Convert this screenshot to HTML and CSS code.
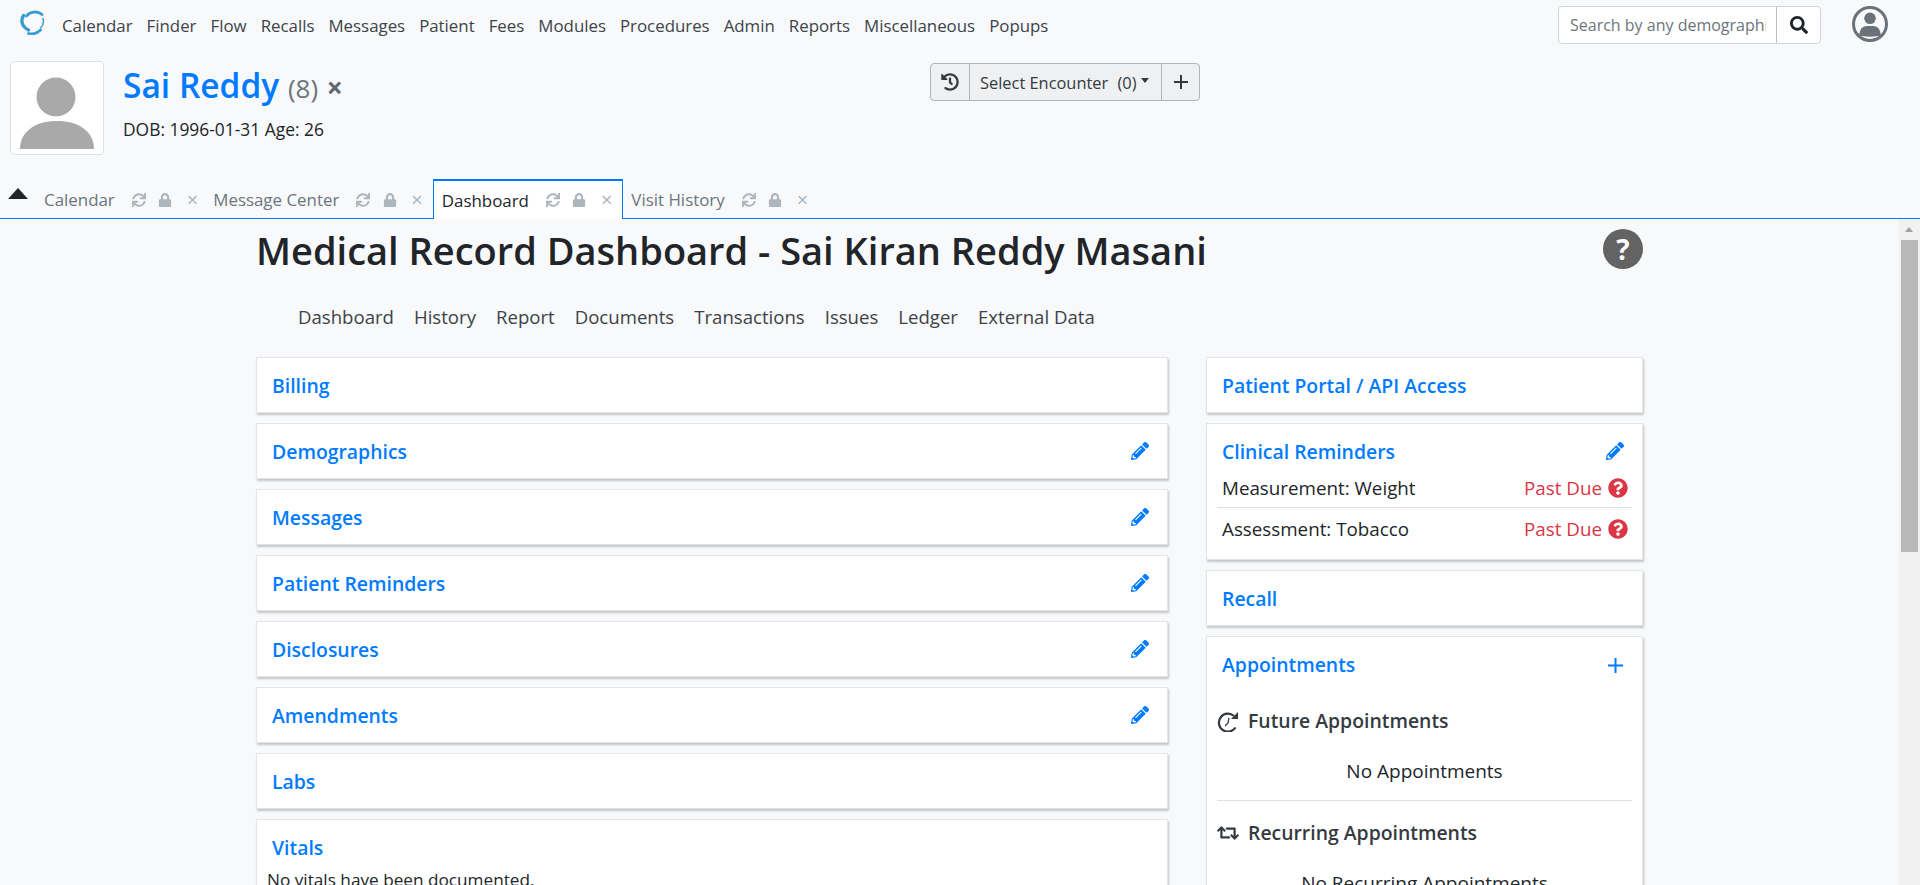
FILE: index.html
```html
<!DOCTYPE html>
<html>
<head>
	<title>OpenEMR</title>
	<link rel="stylesheet" href="styles.css">
</head>
<body>
	<svg class="defs" width="0" height="0">
		<defs>
			<symbol id="sync" viewBox="0 0 512 512"><path d="M440.650 12.570l4 82.770A247.160 247.160 0 0 0 255.830 8C134.730 8 33.910 94.920 12.290 209.820A12 12 0 0 0 24.090 224h49.050a12 12 0 0 0 11.670-9.260 175.910 175.910 0 0 1 317-56.940l-101.460-4.860a12 12 0 0 0-12.570 12v47.410a12 12 0 0 0 12 12H500a12 12 0 0 0 12-12V12a12 12 0 0 0-12-12h-47.370a12 12 0 0 0-11.980 12.570zM255.830 432a175.610 175.610 0 0 1-146-77.800l101.800 4.870a12 12 0 0 0 12.570-12v-47.400a12 12 0 0 0-12-12H12a12 12 0 0 0-12 12V500a12 12 0 0 0 12 12h47.350a12 12 0 0 0 12-12.600l-4.150-82.570A247.170 247.170 0 0 0 255.830 504c121.110 0 221.930-86.920 243.550-201.820a12 12 0 0 0-11.800-14.180h-49.050a12 12 0 0 0-11.670 9.260A175.860 175.860 0 0 1 255.830 432z"/></symbol>
			<symbol id="lock" viewBox="0 0 448 512"><path d="M400 224h-24v-72C376 68.200 307.800 0 224 0S72 68.200 72 152v72H48c-26.500 0-48 21.500-48 48v192c0 26.500 21.500 48 48 48h352c26.500 0 48-21.500 48-48V272c0-26.500-21.500-48-48-48zm-104 0H152v-72c0-39.700 32.300-72 72-72s72 32.300 72 72v72z"/></symbol>
			<symbol id="pencil" viewBox="0 0 512 512"><path d="M497.900 142.100l-46.100 46.100c-4.700 4.700-12.300 4.700-17 0l-111-111c-4.700-4.700-4.700-12.300 0-17l46.100-46.100c18.700-18.700 49.100-18.700 67.900 0l60.100 60.100c18.800 18.700 18.800 49.100 0 67.900zM284.200 99.800L21.600 362.400.4 483.900c-2.900 16.400 11.400 30.600 27.800 27.800l121.500-21.300 262.600-262.600c4.700-4.700 4.700-12.300 0-17l-111-111c-4.800-4.700-12.400-4.700-17.100 0zM124.100 339.900c-5.500-5.500-5.500-14.300 0-19.800l154-154c5.500-5.500 14.300-5.500 19.800 0s5.500 14.300 0 19.800l-154 154c-5.500 5.500-14.300 5.500-19.800 0zM88 424h48v36.300l-64.500 11.300-31.100-31.100L51.700 376H88v48z"/></symbol>
			<symbol id="question" viewBox="0 0 512 512"><path d="M504 256c0 136.997-111.043 248-248 248S8 392.997 8 256C8 119.083 119.043 8 256 8s248 111.083 248 248zM262.655 90c-54.497 0-89.255 22.957-116.549 63.758-3.536 5.286-2.353 12.415 2.715 16.258l34.699 26.310c5.205 3.947 12.621 3.008 16.665-2.122 17.864-22.658 30.113-35.797 57.303-35.797 20.429 0 45.698 13.148 45.698 32.958 0 14.976-12.363 22.667-32.534 33.976C247.128 238.528 216 254.941 216 296v4c0 6.627 5.373 12 12 12h56c6.627 0 12-5.373 12-12v-1.333c0-28.462 83.186-29.647 83.186-106.667 0-58.002-60.165-102-116.531-102zM256 338c-25.365 0-46 20.635-46 46 0 25.364 20.635 46 46 46s46-20.636 46-46c0-25.365-20.635-46-46-46z"/></symbol>
		</defs>
	</svg>

	<nav class="topbar">
		<svg class="logo" viewBox="0 0 25 25" width="25" height="25" fill="none" stroke="#3a9bd1" stroke-linecap="round">
			<path d="M6.500 6C9.500 1.500 17.500 0.500 22 4.500" stroke-width="2.800"/>
			<path d="M23 8.500C24 12 23 15.500 20.500 18" stroke-width="1.500"/>
			<path d="M3.500 5.500C0.500 10 1.500 16.500 8.500 20" stroke-width="3.400"/>
			<path d="M8.500 23.500C13 24.500 17.500 23 20.500 20" stroke-width="2.800"/>
		</svg>
		<div class="menu">
			<a>Calendar</a><a>Finder</a><a>Flow</a><a>Recalls</a><a>Messages</a><a>Patient</a><a>Fees</a><a>Modules</a><a>Procedures</a><a>Admin</a><a>Reports</a><a>Miscellaneous</a><a>Popups</a>
		</div>
		<div class="search">
			<div class="search-input">Search by any demographics</div>
			<div class="search-btn">
				<svg viewBox="0 0 512 512" width="18" height="18"><path fill="#212529" d="M505 442.700L405.300 343c-4.500-4.500-10.600-7-17-7H372c27.600-35.300 44-79.700 44-128C416 93.100 322.900 0 208 0S0 93.100 0 208s93.100 208 208 208c48.300 0 92.700-16.400 128-44v16.300c0 6.400 2.500 12.500 7 17l99.700 99.700c9.400 9.400 24.600 9.400 33.900 0l28.300-28.300c9.400-9.400 9.400-24.600.1-34zM208 336c-70.700 0-128-57.200-128-128 0-70.700 57.200-128 128-128 70.700 0 128 57.200 128 128 0 70.700-57.200 128-128 128z"/></svg>
			</div>
		</div>
		<svg class="user" viewBox="0 0 36 36" width="36" height="36">
			<circle cx="18" cy="18" r="16.500" fill="none" stroke="#6b7178" stroke-width="3"/>
			<circle cx="18" cy="12.300" r="5.800" fill="#6b7178"/>
			<path d="M7.300 29.500C7.300 23 11 20 15 20h6c4 0 7.700 3 7.700 9.500C25 31 11 31 7.300 29.500z" fill="#6b7178"/>
		</svg>
	</nav>

	<header class="patient">
		<div class="photo">
			<svg viewBox="0 0 92 92" width="92" height="92">
				<ellipse cx="45" cy="35" rx="19.500" ry="19.500" fill="#a9a9a9"/>
				<path d="M9 87c0-18 16-28 37-28s37 10 37 28z" fill="#a9a9a9"/>
			</svg>
		</div>
		<div class="patient-info">
			<div class="patient-name"><a>Sai Reddy</a> <span class="pid">(8)</span> <span class="pclose">×</span></div>
			<div class="dob">DOB: 1996-01-31 Age: 26</div>
		</div>
		<div class="encounter">
			<div class="enc-btn enc-history">
				<svg viewBox="0 0 512 512" width="18" height="18"><path fill="#343a40" d="M504 255.531c.253 136.640-111.180 248.372-247.820 248.468-59.015.042-113.223-20.530-155.822-54.911-11.077-8.940-11.905-25.541-1.839-35.607l11.267-11.267c8.609-8.609 22.353-9.551 31.891-1.984C173.062 425.135 212.781 440 256 440c101.705 0 184-82.311 184-184 0-101.705-82.311-184-184-184-48.814 0-93.149 18.970-126.068 49.932l50.754 50.754c10.080 10.080 2.941 27.314-11.313 27.314H24c-8.837 0-16-7.163-16-16V38.627c0-14.254 17.234-21.393 27.314-11.314l49.372 49.372C129.209 34.136 189.552 8 256 8c136.810 0 247.747 110.780 248 247.531zm-180.912 78.784l9.823-12.630c8.138-10.463 6.253-25.542-4.210-33.679L288 256.349V152c0-13.255-10.745-24-24-24h-16c-13.255 0-24 10.745-24 24v135.651l65.409 50.874c10.463 8.137 25.541 6.253 33.679-4.210z"/></svg>
			</div>
			<div class="enc-btn enc-select">Select Encounter <span class="enc-count">(0)</span><span class="caret"></span></div>
			<div class="enc-btn enc-plus">
				<svg viewBox="0 0 14 14" width="14" height="14"><path d="M7 0v14M0 7h14" stroke="#343a40" stroke-width="2"/></svg>
			</div>
		</div>
	</header>

	<div class="tabs">
		<div class="collapse-arrow"></div>
		<div class="tab"><span class="tab-name">Calendar</span>
			<svg class="ti"><use href="#sync"/></svg><svg class="ti"><use href="#lock"/></svg><span class="tx">×</span></div>
		<div class="tab"><span class="tab-name">Message Center</span>
			<svg class="ti"><use href="#sync"/></svg><svg class="ti"><use href="#lock"/></svg><span class="tx">×</span></div>
		<div class="tab active"><span class="tab-name">Dashboard</span>
			<svg class="ti"><use href="#sync"/></svg><svg class="ti"><use href="#lock"/></svg><span class="tx">×</span></div>
		<div class="tab"><span class="tab-name">Visit History</span>
			<svg class="ti"><use href="#sync"/></svg><svg class="ti"><use href="#lock"/></svg><span class="tx">×</span></div>
	</div>

	<div class="frame">
		<main class="page">
			<div class="title-row">
				<h1>Medical Record Dashboard - Sai Kiran Reddy Masani</h1>
				<div class="help">?</div>
			</div>
			<div class="subnav">
				<a>Dashboard</a><a>History</a><a>Report</a><a>Documents</a><a>Transactions</a><a>Issues</a><a>Ledger</a><a>External Data</a>
			</div>
			<div class="columns">
				<div class="col-left">
					<section class="card"><h2>Billing</h2></section>
					<section class="card"><h2>Demographics</h2><svg class="pen"><use href="#pencil"/></svg></section>
					<section class="card"><h2>Messages</h2><svg class="pen"><use href="#pencil"/></svg></section>
					<section class="card"><h2>Patient Reminders</h2><svg class="pen"><use href="#pencil"/></svg></section>
					<section class="card"><h2>Disclosures</h2><svg class="pen"><use href="#pencil"/></svg></section>
					<section class="card"><h2>Amendments</h2><svg class="pen"><use href="#pencil"/></svg></section>
					<section class="card"><h2>Labs</h2></section>
					<section class="card vitals">
						<h2>Vitals</h2>
						<p>No vitals have been documented.</p>
					</section>
				</div>
				<div class="col-right">
					<section class="card"><h2>Patient Portal / API Access</h2></section>
					<section class="card reminders">
						<div class="card-head"><h2>Clinical Reminders</h2><svg class="pen"><use href="#pencil"/></svg></div>
						<div class="rem-row"><span>Measurement: Weight</span><span class="due">Past Due <svg class="qmark"><use href="#question"/></svg></span></div>
						<div class="rem-row last"><span>Assessment: Tobacco</span><span class="due">Past Due <svg class="qmark"><use href="#question"/></svg></span></div>
					</section>
					<section class="card"><h2>Recall</h2></section>
					<section class="card appts">
						<div class="card-head"><h2>Appointments</h2>
							<svg class="add" viewBox="0 0 15 15" width="15" height="15"><path d="M7.500 0v15M0 7.500h15" stroke="#007bff" stroke-width="2"/></svg>
						</div>
						<h3>
							<svg viewBox="0 0 21 21" width="21" height="21">
								<path d="M16.500 5A9 9 0 1 0 18 16.500" fill="none" stroke="#343a40" stroke-width="2.200"/>
								<path d="M20.500 1v7h-7z" fill="#343a40"/>
								<path d="M11.500 7L10.500 12 7.500 15" fill="none" stroke="#343a40" stroke-width="1.300"/>
							</svg>
							Future Appointments
						</h3>
						<div class="none">No Appointments</div>
						<hr>
						<h3 class="after-rule">
							<svg viewBox="0 0 640 512" width="23" height="18"><path fill="#343a40" d="M629.657 343.598L528.971 444.284c-9.373 9.372-24.568 9.372-33.941 0L394.343 343.598c-9.373-9.373-9.373-24.569 0-33.941l10.823-10.823c9.562-9.562 25.133-9.34 34.419.492L480 342.118V160H292.451a24.005 24.005 0 0 1-16.971-7.029l-16-16C244.361 121.851 255.069 96 276.451 96H520c13.255 0 24 10.745 24 24v222.118l40.416-42.792c9.285-9.831 24.856-10.054 34.419-.492l10.823 10.823c9.372 9.372 9.372 24.569-.001 33.941zm-265.138 15.431A23.999 23.999 0 0 0 347.548 352H160V169.881l40.416 42.792c9.286 9.831 24.856 10.054 34.419.491l10.822-10.822c9.373-9.373 9.373-24.569 0-33.941L144.971 67.716c-9.373-9.373-24.569-9.373-33.941 0L10.343 168.402c-9.373 9.373-9.373 24.569 0 33.941l10.822 10.822c9.562 9.562 25.133 9.34 34.419-.491L96 169.881V392c0 13.255 10.745 24 24 24h243.549c21.382 0 32.090-25.851 16.971-40.971l-16.001-16z"/></svg>
							Recurring Appointments
						</h3>
						<div class="none">No Recurring Appointments</div>
					</section>
				</div>
			</div>
		</main>
		<div class="scrollbar">
			<div class="sb-up"></div>
			<div class="sb-thumb"></div>
		</div>
	</div>
</body>
</html>
```

FILE: styles.css
```css
html, body {
	margin: 0;
	height: 885px;
	overflow: hidden;
}

body {
	background: #f8f9fa;
	color: #212529;
	font-family: "Open Sans", "Noto Sans", sans-serif;
	font-size: 16px;
	display: flex;
	flex-direction: column;
}

h1, h2, h3, p {
	margin: 0;
}

.defs {
	position: absolute;
}

/* top menu */
.topbar {
	height: 52px;
	display: flex;
	align-items: center;
	padding-left: 20px;
	flex: none;
}

.logo {
	margin-right: 17px;
	margin-top: -7px;
}

.menu {
	display: flex;
	gap: 14px;
	flex: 1;
	color: #3d4349;
	font-size: 16.850px;
	margin-top: -1px;
}

.search {
	display: flex;
	width: 263px;
	height: 38px;
	box-sizing: border-box;
	border: 1px solid #ced4da;
	border-radius: 4px;
	background: #fff;
	margin: -2px 31px 0 0;
}

.search-input {
	flex: 1;
	overflow: hidden;
	white-space: nowrap;
	margin: 0 10px 0 11px;
	padding: 7px 0 5px;
	color: #6c757d;
}

.search-btn {
	width: 43px;
	border-left: 1px solid #b8bec4;
	display: flex;
	align-items: center;
	justify-content: center;
}

.user {
	margin: -4px 32px 0 0;
}

/* patient */
.patient {
	height: 128px;
	flex: none;
	display: flex;
	position: relative;
}

.photo {
	width: 92px;
	height: 92px;
	margin: 9px 0 0 10px;
	border: 1px solid #dee2e6;
	border-radius: 4px;
	background: #fff;
}

.patient-info {
	margin: 10px 0 0 19px;
}

.patient-name {
	font-size: 33.500px;
	line-height: 46px;
}

.patient-name a {
	color: #007bff;
	font-weight: 600;
}

.pid {
	color: #6c757d;
	font-size: 26px;
}

.pclose {
	color: #5f6770;
	font-size: 28px;
	font-weight: bold;
}

.dob {
	margin-top: 6px;
	font-size: 17.400px;
}

.encounter {
	position: absolute;
	left: 930px;
	top: 11px;
	display: flex;
	height: 38px;
	box-sizing: border-box;
	border: 1px solid #adb5bd;
	border-radius: 4px;
	background: #eef0f2;
	color: #343a40;
	font-size: 16.400px;
}

.enc-btn {
	display: flex;
	align-items: center;
}

.enc-history {
	width: 38px;
	justify-content: center;
}

.enc-select {
	width: 193px;
	box-sizing: border-box;
	padding-left: 10px;
	border-left: 1px solid #adb5bd;
	border-right: 1px solid #adb5bd;
	white-space: pre;
}

.enc-count {
	margin-left: 5px;
}

.enc-plus {
	width: 37px;
	justify-content: center;
}

.caret {
	width: 0;
	height: 0;
	border-left: 4.500px solid transparent;
	border-right: 4.500px solid transparent;
	border-top: 5px solid #343a40;
	margin: -3px 0 0 4px;
}

/* tabs */
.tabs {
	height: 39px;
	flex: none;
	box-sizing: border-box;
	border-bottom: 1px solid #007bff;
	display: flex;
	align-items: flex-end;
	padding-left: 8px;
	font-size: 16.900px;
}

.collapse-arrow {
	width: 0;
	height: 0;
	border-left: 10px solid transparent;
	border-right: 10px solid transparent;
	border-bottom: 11px solid #212529;
	margin: 0 8px 19px 0;
}

.tab {
	display: flex;
	align-items: center;
	height: 37px;
	padding: 0 7px 0 8px;
	color: #6c757d;
	box-sizing: border-box;
}

.tab.active {
	background: #fff;
	color: #212529;
	border: 1px solid #007bff;
	border-top-width: 2px;
	border-bottom: none;
	height: 40px;
	margin: 0 0 -1px 3px;
	padding-right: 10px;
}

.tab-name {
	margin-right: 17px;
}

.ti {
	width: 14px;
	height: 14px;
	margin-right: 12.500px;
	fill: #adb5bd;
}

.tx {
	color: #adb5bd;
	font-size: 20px;
	line-height: 20px;
	margin-left: 2px;
}

/* main frame */
.frame {
	flex: 1;
	display: flex;
	min-height: 0;
}

.page {
	flex: 1;
	overflow: hidden;
	padding: 0 256px;
	box-sizing: border-box;
}

.title-row {
	display: flex;
	justify-content: space-between;
	align-items: center;
	height: 64px;
}

h1 {
	font-size: 38px;
	font-weight: 600;
	line-height: 50px;
	margin-top: -2px;
}

.help {
	width: 40px;
	height: 40px;
	border-radius: 50%;
	background: #636363;
	color: #fbfbfb;
	font-size: 28px;
	font-weight: bold;
	line-height: 40px;
	text-align: center;
	margin-top: -4px;
}

.subnav {
	display: flex;
	gap: 20px;
	padding: 0 0 0 42px;
	margin-top: 22px;
	line-height: 24px;
	color: #3d4349;
	font-size: 18.600px;
}

.columns {
	display: flex;
	gap: 38px;
	margin-top: 28px;
	align-items: flex-start;
}

.col-left {
	width: 912px;
	flex: none;
}

.col-right {
	width: 437px;
	flex: none;
}

.card {
	background: #fff;
	border: 1px solid #e3e5e8;
	box-shadow: 1px 2px 2px #c4c6c8;
	box-sizing: border-box;
	min-height: 56px;
	margin-bottom: 10px;
	padding: 16px 15px 14px;
	display: flex;
	justify-content: space-between;
	align-items: center;
}

h2 {
	font-size: 19.400px;
	font-weight: 600;
	color: #007bff;
	line-height: 24px;
}

.pen {
	width: 18px;
	height: 18px;
	fill: #007bff;
	margin: -2px 3px 0 0;
}

.card.vitals, .card.reminders, .card.appts {
	display: block;
}

.vitals p {
	margin: 8px 0 0 -5px;
	font-size: 17.200px;
	line-height: 24px;
}

.card-head {
	display: flex;
	justify-content: space-between;
	align-items: center;
}

.reminders {
	padding-bottom: 11px;
}

.rem-row {
	display: flex;
	justify-content: space-between;
	margin: 0 -5px;
	padding: 12px 0 7px 5px;
	border-bottom: 1px solid #dee2e6;
	font-size: 18.800px;
	line-height: 24px;
}

.rem-row.last {
	border-bottom: none;
	padding-top: 9px;
	padding-bottom: 7px;
}

.due {
	color: #dc3545;
	display: flex;
	align-items: center;
	gap: 6px;
}

.qmark {
	width: 20px;
	height: 20px;
	fill: #dc3545;
	margin-right: 4px;
}

.add {
	margin-right: 4px;
}

h3 {
	display: flex;
	align-items: center;
	gap: 9px;
	font-size: 19.400px;
	font-weight: 600;
	line-height: 24px;
	color: #343a40;
	margin: 32px 0 0 -5px;
}

h3 svg {
	width: 22px;
}

h3.after-rule {
	margin-top: 20px;
}

.none {
	text-align: center;
	margin-top: 26px;
	font-size: 19px;
	line-height: 24px;
}

hr {
	border: 0;
	border-top: 1px solid #dee2e6;
	margin: 17px -5px 0;
}

/* scrollbar */
.scrollbar {
	width: 21px;
	flex: none;
	background: #f1f1f1;
}

.sb-up {
	height: 21px;
	position: relative;
}

.sb-up::after {
	content: "";
	position: absolute;
	left: 6px;
	top: 8px;
	border-left: 4.500px solid transparent;
	border-right: 4.500px solid transparent;
	border-bottom: 5px solid #a3a3a3;
}

.sb-thumb {
	height: 312px;
	margin: 0 2px;
	background: #b9b9b9;
}
```
